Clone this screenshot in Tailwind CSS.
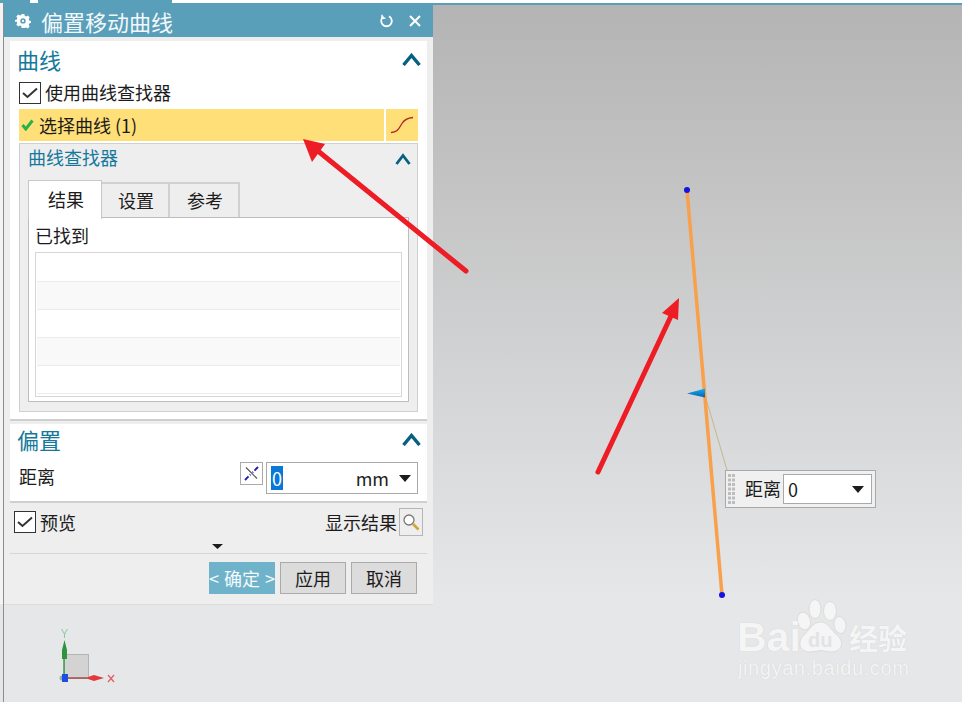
<!DOCTYPE html>
<html lang="zh">
<head>
<meta charset="utf-8">
<script src="https://cdn.jsdelivr.net/npm/@tailwindcss/browser@4"></script>
</head>
<body class="m-0">
<div class="relative w-[962px] h-[702px] overflow-hidden flex flex-col bg-white text-[18px] leading-[24px] text-[#1c1c1c] font-['Noto_Sans_CJK_SC','Noto_Sans',sans-serif]">
  <!-- top strip -->
  <div class="flex h-[3px] shrink-0">
    <div class="w-[30px] bg-[#5a9fba]"></div>
    <div class="w-[8px] bg-white"></div>
    <div class="w-[134px] bg-[#5a9fba]"></div>
    <div class="flex-1 bg-white"></div>
  </div>
  <div class="flex flex-1 min-h-0">
    <div class="w-[3px] shrink-0 bg-[linear-gradient(180deg,#f4f4f4_0,#f4f4f4_601px,#e5e6e8_601px)]"></div>
    <!-- viewport -->
    <div class="flex-1 min-w-0 border-l border-l-[#8c8c8c] border-t-2 border-t-[#5a9fba] bg-[linear-gradient(180deg,#b4b4b4_0,#e6e7e9_595px)]">
      <!-- dialog -->
      <div class="w-[429px] h-[600px] bg-[#eeeeee] border-b border-b-[#dcdcdc] flex flex-col">
        <!-- title -->
        <div class="h-[32px] shrink-0 bg-[#5a9fba] flex items-center pl-[11px] pr-[12px] text-[#f2f8fa]">
          <svg class="w-[16px] h-[16px] shrink-0" viewBox="0 0 16 16"><path fill="#fff" fill-rule="evenodd" d="M6.600 1h2.800l.4 1.900 1.300.6 1.700-1 1.900 2-1 1.600.5 1.300 1.800.5v2.200l-1.800.5-.5 1.300 1 1.600-1.900 1.900-1.700-1-1.300.6L9.400 15H6.600l-.4-1.900-1.300-.6-1.700 1-1.900-1.900 1-1.600-.5-1.300L0 8.800V6.900l1.800-.5.5-1.300-1-1.600 1.900-2 1.700 1 1.300-.6zM8 5.200a2.700 2.700 0 1 0 0 5.400 2.700 2.700 0 0 0 0-5.400z"/><circle cx="8" cy="7.900" r="1.100" fill="#fff"/></svg>
          <span class="ml-[10px] text-[22px] leading-[32px] whitespace-nowrap">偏置移动曲线</span>
          <svg class="ml-auto w-[14px] h-[14px] relative left-[-1px]" viewBox="0 0 14 14" fill="none" stroke="#fff" stroke-width="1.800"><path d="M4.500 2.600A5.300 5.300 0 1 0 10 2.300"/><path d="M3 .8v3.400h3.400" stroke-width="1.500"/></svg>
          <svg class="ml-[15px] w-[12px] h-[12px]" viewBox="0 0 12 12" stroke="#fff" stroke-width="2"><path d="M1 1l10 10M11 1L1 11"/></svg>
        </div>
        <!-- curve section -->
        <div class="mt-[4px] mx-[6px] h-[380px] shrink-0 bg-white border-b-2 border-b-[#cfcfcf] flex flex-col">
          <div class="h-[41px] shrink-0 flex items-center pl-[7px] pr-[6px] text-[22px] text-[#16799c]">
            <span class="relative top-[-3px]">曲线</span>
            <svg class="ml-auto w-[19px] h-[13px] relative top-[-2px]" viewBox="0 0 19 13" fill="none" stroke="#06607f" stroke-width="3.400"><path d="M1.500 12L9.500 2.500 17.500 12"/></svg>
          </div>
          <div class="h-[22px] shrink-0 ml-[9px] flex items-center">
            <span class="w-[22px] h-[22px] border-[1.500px] border-[#333] bg-white flex items-center justify-center"><svg class="w-[16px] h-[12px]" viewBox="0 0 16 12" fill="none" stroke="#333" stroke-width="2"><path d="M1 6l4.500 4L15 1.500"/></svg></span>
            <span class="ml-[4px] whitespace-nowrap relative top-[-1px]">使用曲线查找器</span>
          </div>
          <div class="mt-[5px] h-[32px] shrink-0 ml-[9px] mr-[9px] flex gap-[2px]">
            <div class="flex-1 bg-[#ffdf77] flex items-center pl-[2px]">
              <svg class="w-[13px] h-[12px]" viewBox="0 0 13 12" fill="none" stroke="#27b34b" stroke-width="3"><path d="M1.500 6l3.300 4L11.500 1.500"/></svg>
              <span class="ml-[5px] whitespace-nowrap">选择曲线 (1)</span>
            </div>
            <div class="w-[32px] bg-[#ffdf77] flex items-center justify-center">
              <svg class="w-[24px] h-[18px]" viewBox="0 0 24 18" fill="none" stroke="#b5202a" stroke-width="1.300"><path d="M1 16.500C8 16.500 9 12 12 7.500 14 4 17 2 23 1.500"/></svg>
            </div>
          </div>
          <!-- finder group -->
          <div class="mt-[2px] ml-[9px] mr-[9px] h-[269px] shrink-0 bg-[#eeeeee] border border-[#d0d0d0] flex flex-col">
            <div class="h-[30px] shrink-0 flex items-center pl-[8px] pr-[6px] text-[#16799c]">
              <span class="whitespace-nowrap relative top-[-2px]">曲线查找器</span>
              <svg class="ml-auto w-[16px] h-[12px]" viewBox="0 0 16 12" fill="none" stroke="#06607f" stroke-width="2.800"><path d="M1.500 11L8 2.500 14.500 11"/></svg>
            </div>
            <div class="relative z-10 mt-[6px] ml-[8px] h-[39px] shrink-0 flex items-start">
              <div class="w-[74px] h-[39px] bg-white border border-[#c8c8c8] border-b-0 flex items-center justify-center pl-[2px] pb-[3px]">结果</div>
              <div class="mt-[2px] w-[68px] h-[35px] border-r-2 border-t-2 border-[#d0d0d0] flex items-center justify-center pl-[2px] pb-[1px]">设置</div>
              <div class="mt-[2px] w-[70px] h-[35px] border-r-2 border-t-2 border-[#d0d0d0] flex items-center justify-center pl-[2px] pb-[1px]">参考</div>
            </div>
            <div class="mt-[-2px] ml-[8px] mr-[8px] h-[185px] shrink-0 bg-white border border-[#bdbdbd] pl-[6px] pr-[6px] flex flex-col">
              <div class="mt-[5px] h-[29px] shrink-0 whitespace-nowrap">已找到</div>
              <div class="h-[145px] shrink-0 border border-[#d6d6d6] flex flex-col px-px pt-[1px]">
                <div class="h-[28px] shrink-0 border-b border-b-[#ececec]"></div>
                <div class="h-[28px] shrink-0 border-b border-b-[#ececec] bg-[#f9f9f9]"></div>
                <div class="h-[28px] shrink-0 border-b border-b-[#ececec]"></div>
                <div class="h-[28px] shrink-0 border-b border-b-[#ececec] bg-[#f9f9f9]"></div>
                <div class="h-[28px] shrink-0 border-b border-b-[#ececec]"></div>
              </div>
            </div>
          </div>
        </div>
        <!-- offset section -->
        <div class="mt-[3px] mx-[6px] h-[79px] shrink-0 bg-white border-b-2 border-b-[#cfcfcf] flex flex-col">
          <div class="h-[35px] shrink-0 flex items-center pl-[7px] pr-[6px] text-[22px] text-[#16799c]">
            <span class="relative top-[-3px]">偏置</span>
            <svg class="ml-auto w-[19px] h-[13px] relative top-[-2px]" viewBox="0 0 19 13" fill="none" stroke="#06607f" stroke-width="3.400"><path d="M1.500 12L9.500 2.500 17.500 12"/></svg>
          </div>
          <div class="mt-[3px] h-[32px] shrink-0 flex items-start pl-[9px] pr-[9px]">
            <span class="leading-[28px]">距离</span>
            <span class="ml-auto w-[23px] h-[23px] border border-[#aaa] bg-white flex items-center justify-center"><svg class="w-[15px] h-[15px]" viewBox="0 0 15 15" fill="none"><path d="M2 1.500l11 11" stroke="#555" stroke-width="1.200"/><path d="M14 1L8.500 6.500M1 14l5.500-5.500" stroke="#1c1cb0" stroke-width="1.800" stroke-dasharray="5 2"/></svg></span>
            <div class="ml-[3px] w-[152px] h-[32px] border border-[#a9a9a9] bg-white flex items-center pl-[4px] pr-[6px]">
              <span class="w-[12px] h-[24px] bg-[#0a78d7] text-white text-center leading-[24px]">0</span>
              <span class="ml-auto whitespace-nowrap">mm</span>
              <svg class="ml-[10px] w-[12px] h-[7px]" viewBox="0 0 12 7"><path fill="#1c1c1c" d="M0 0h12L6 7z"/></svg>
            </div>
          </div>
        </div>
        <!-- preview row -->
        <div class="mt-[5px] h-[28px] shrink-0 flex items-center pl-[10px] pr-[10px]">
          <span class="w-[22px] h-[22px] border-[1.500px] border-[#333] bg-white flex items-center justify-center"><svg class="w-[16px] h-[12px]" viewBox="0 0 16 12" fill="none" stroke="#333" stroke-width="2"><path d="M1 6l4.500 4L15 1.500"/></svg></span>
          <span class="ml-[4px]">预览</span>
          <span class="ml-auto whitespace-nowrap">显示结果</span>
          <span class="ml-[2px] w-[24px] h-[28px] border border-[#b5b5b5] flex items-center justify-center"><svg class="w-[18px] h-[18px]" viewBox="0 0 18 18" fill="none"><circle cx="7" cy="7" r="5" stroke="#777" stroke-width="1.300" fill="#fdfdfd"/><path d="M11 11l5.500 5.500" stroke="#d4a437" stroke-width="2.600"/></svg></span>
        </div>
        <div class="mt-[8px] h-[5px] shrink-0 flex justify-center pr-[1px]">
          <svg class="w-[11px] h-[5px] ml-[-1px]" viewBox="0 0 11 5"><path fill="#1c1c1c" d="M0 0h11L5.500 5z"/></svg>
        </div>
        <div class="mt-[4px] mx-[6px] h-px shrink-0 bg-[#d5d5d5]"></div>
        <div class="mt-[8px] h-[32px] shrink-0 flex justify-end gap-[5px] pr-[16px]">
          <div class="w-[66px] h-[32px] bg-[#6fb3cb] flex items-center justify-between text-[#f4fafc] whitespace-nowrap"><span>&lt;</span><span>确定</span><span>&gt;</span></div>
          <div class="w-[66px] h-[32px] bg-[#dcdcdc] border border-[#aaa] flex items-center justify-center">应用</div>
          <div class="w-[66px] h-[32px] bg-[#dcdcdc] border border-[#aaa] flex items-center justify-center">取消</div>
        </div>
      </div>
    </div>
  </div>

  <!-- 3D geometry and annotations on the viewport -->
  <svg class="absolute left-0 top-0 w-[962px] h-[702px] pointer-events-none" viewBox="0 0 962 702" fill="none">
    <defs>
      <linearGradient id="cone" x1="0" y1="0" x2="0" y2="1"><stop offset="0" stop-color="#18b0f0"/><stop offset="1" stop-color="#0a5fb0"/></linearGradient>
    </defs>
    <path d="M705 395L727 470" stroke="#c6b88c" stroke-width="1"/>
    <path d="M687 190L722 595" stroke="#f9a04a" stroke-width="3.500"/>
    <circle cx="687" cy="190" r="3" fill="#1414e0"/>
    <circle cx="722" cy="595" r="3" fill="#1414e0"/>
    <path d="M687 393.500L705 388.500V397.500z" fill="url(#cone)"/>
    <!-- red arrows -->
    <path d="M466 271L318 151" stroke="#ee1c25" stroke-width="5" stroke-linecap="round"/>
    <path d="M303 139L325 144 312 162z" fill="#ee1c25"/>
    <path d="M598 472L671 316" stroke="#ee1c25" stroke-width="5" stroke-linecap="round"/>
    <path d="M679 298L678 320 662 313z" fill="#ee1c25"/>
    <!-- triad -->
    <rect x="64.500" y="654.500" width="24" height="24" fill="#d3d3d3" stroke="#b5b5b5"/>
    <path d="M64 678V650" stroke="#3c9a48" stroke-width="1.500"/>
    <path d="M64.500 640l-2.500 10v9h5v-9z" fill="#2f9440"/>
    <path d="M61.500 629l3 5 3-5M64.500 634v4" stroke="#8cc596" stroke-width="1"/>
    <path d="M66 678H92" stroke="#a84848" stroke-width="1.500"/>
    <path d="M104 678l-10-3-6 2v2l6 2z" fill="#e23a3a"/>
    <path d="M108 675l6 7M114 675l-6 7" stroke="#e06060" stroke-width="1.300"/>
    <circle cx="62" cy="678" r="2.500" fill="#9aa"/>
    <rect x="62" y="674" width="6" height="8" fill="#1a4fe0"/>
    <!-- watermark paw -->
    <g fill="#f5f5f5" stroke="#dcdcdc" stroke-width="1">
      <ellipse cx="815" cy="609" rx="6" ry="9.500"/>
      <ellipse cx="830" cy="611" rx="6.500" ry="9.500"/>
      <ellipse cx="804" cy="621" rx="6.500" ry="9" transform="rotate(-15 804 621)"/>
      <ellipse cx="840" cy="625" rx="6" ry="8.500" transform="rotate(-10 840 625)"/>
      <path d="M821 622c7 0 10 8 16 13 8 7 5 17-6 17-4 0-7-1.500-10-1.500s-7 1.500-11 1.500c-10 0-13-9-7-16 6-5 9-14 18-14z"/>
    </g>
  </svg>

  <!-- floating distance input -->
  <div class="absolute left-[725px] top-[470px] w-[151px] h-[38px] bg-[#f0f0f0] border border-[#a9a9a9] flex items-center pl-[2px] pr-[3px]">
    <svg class="w-[8px] h-[32px] shrink-0" viewBox="0 0 8 32" fill="#bdbdbd"><rect x="0" y="1" width="3" height="3"/><rect x="4" y="1" width="3" height="3"/><rect x="0" y="5.500" width="3" height="3"/><rect x="4" y="5.500" width="3" height="3"/><rect x="0" y="10" width="3" height="3"/><rect x="4" y="10" width="3" height="3"/><rect x="0" y="14.500" width="3" height="3"/><rect x="4" y="14.500" width="3" height="3"/><rect x="0" y="19" width="3" height="3"/><rect x="4" y="19" width="3" height="3"/><rect x="0" y="23.500" width="3" height="3"/><rect x="4" y="23.500" width="3" height="3"/><rect x="0" y="28" width="3" height="3"/><rect x="4" y="28" width="3" height="3"/></svg>
    <span class="ml-[9px] whitespace-nowrap relative top-[-1px]">距离</span>
    <div class="ml-[2px] w-[89px] h-[30px] bg-white border border-[#a9a9a9] flex items-center pl-[4px] pr-[7px]">
      <span>0</span>
      <svg class="ml-auto w-[12px] h-[7px]" viewBox="0 0 12 7"><path fill="#1c1c1c" d="M0 0h12L6 7z"/></svg>
    </div>
  </div>

  <!-- watermark text -->
  <div class="absolute left-[737px] top-[614px] text-[41px] leading-[46px] font-bold font-['Liberation_Sans',sans-serif] text-[#f5f5f5] [text-shadow:0_0_1px_#c8c8c8]">Bai</div>
  <div class="absolute left-[808px] top-[628px] text-[20px] leading-[24px] font-bold font-['Liberation_Sans',sans-serif] text-[#e2e3e5]">du</div>
  <div class="absolute left-[849px] top-[619px] text-[29px] leading-[36px] font-bold text-[#f5f5f5] [text-shadow:0_0_1px_#c8c8c8] whitespace-nowrap">经验</div>
  <div class="absolute left-[738px] top-[656px] text-[20px] leading-[24px] tracking-[0.6px] font-['Liberation_Sans',sans-serif] text-[#f5f5f5] [text-shadow:0_0_1px_#c8c8c8] whitespace-nowrap">jingyan.baidu.com</div>
</div>
</body>
</html>
